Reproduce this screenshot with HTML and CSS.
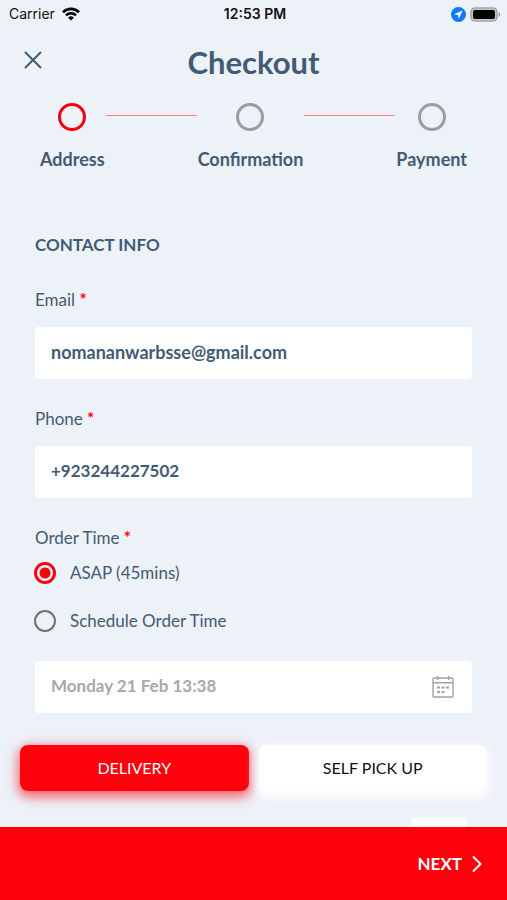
FILE: index.html
```
<!DOCTYPE html>
<html lang="en">
<head>
    <meta charset="UTF-8">
    <meta name="viewport" content="width=device-width, initial-scale=1.0">
    <title>Checkout</title>
    <link rel="stylesheet" href="styles.css">
</head>
<body>
    <div class="status-bar">
        <div class="status-left">
            <span>Carrier</span>
            <svg width="18" height="14" viewBox="0 0 18 14" fill="none" stroke="#000" stroke-width="2.6">
                <path d="M1 5.2a11.4 11.4 0 0 1 16 0"/>
                <path d="M4 8.3a7 7 0 0 1 10 0"/>
                <path d="M9 13.6 6.1 10.7a4.2 4.2 0 0 1 5.8 0z" fill="#000" stroke="none"/>
            </svg>
        </div>
        <div class="status-time">12:53 PM</div>
        <div class="status-right">
            <svg width="15" height="15" viewBox="0 0 15 15">
                <circle cx="7.5" cy="7.5" r="7.5" fill="#0a7aff"/>
                <path d="M11.6 3.4 3 7.3l4.1.6.6 4.1z" fill="#fff"/>
            </svg>
            <svg width="31" height="15" viewBox="0 0 31 15">
                <rect x="1" y="1" width="26" height="13" rx="4" fill="#c4c7cc" stroke="#a5a7ab" stroke-width="1.6"/>
                <rect x="3" y="3" width="22" height="9" rx="2" fill="#000"/>
                <path d="M28.6 5c2.4 1 2.4 4 0 5z" fill="#a5a7ab"/>
            </svg>
        </div>
    </div>

    <header class="header">
        <button type="button" class="close-btn" aria-label="Close">
            <svg width="18" height="18" viewBox="0 0 18 18" fill="none" stroke="#435b74" stroke-width="2" stroke-linecap="round">
                <path d="M1.5 1.5l15 15M16.5 1.5l-15 15"/>
            </svg>
        </button>
        <h1>Checkout</h1>
    </header>

    <div class="steps">
        <div class="step active">
            <span class="circle"></span>
            <span>Address</span>
        </div>
        <div class="line"></div>
        <div class="step">
            <span class="circle"></span>
            <span>Confirmation</span>
        </div>
        <div class="line"></div>
        <div class="step">
            <span class="circle"></span>
            <span>Payment</span>
        </div>
    </div>

    <main class="content">
        <form id="checkoutForm" class="checkout-form">
            <h2>CONTACT INFO</h2>

            <div class="form-group">
                <label for="email">Email <span class="required">*</span></label>
                <input type="email" id="email" class="field" value="nomananwarbsse@gmail.com" required>
            </div>

            <div class="form-group">
                <label for="phone">Phone <span class="required">*</span></label>
                <input type="tel" id="phone" class="field" value="+923244227502" required>
            </div>

            <fieldset class="order-time">
                <legend>Order Time <span class="required">*</span></legend>
                <label class="radio-row" for="asap">
                    <input type="radio" id="asap" name="orderTime" checked>
                    ASAP (45mins)
                </label>
                <label class="radio-row" for="schedule">
                    <input type="radio" id="schedule" name="orderTime">
                    Schedule Order Time
                </label>
            </fieldset>

            <div class="field date-field">
                <input type="text" id="orderDate" aria-label="Order date" value="Monday 21 Feb 13:38" disabled>
                <svg width="22" height="22" viewBox="0 0 22 22" fill="none" stroke="#a3a3a3" stroke-width="1.4">
                    <rect x="1" y="2" width="20" height="19" rx="1"/>
                    <path d="M1 6.8h20M5.5 0v4M16.5 0v4"/>
                    <path d="M5 11.5h3M9.5 11.5h3M14 11.5h3M5 16h3M9.5 16h3" stroke-width="2"/>
                </svg>
            </div>
        </form>

        <div class="delivery-options">
            <button type="button" class="option selected">DELIVERY</button>
            <button type="button" class="option">SELF PICK UP</button>
        </div>

        <div class="address-card"></div>
    </main>

    <footer class="footer">
        <button type="submit" form="checkoutForm" class="next-btn">
            NEXT
            <svg width="10" height="18" viewBox="0 0 10 18" fill="none" stroke="#fff" stroke-width="2">
                <path d="M1 1.5 8.5 9 1 16.5"/>
            </svg>
        </button>
    </footer>
</body>
</html>
```

FILE: styles.css
```
* {
    box-sizing: border-box;
}
body {
    font-family: Lato, 'Open Sans', sans-serif;
    font-size: 17px;
    line-height: 20px;
    background-color: #edf1f8;
    color: #435b74;
    margin: 0;
    height: 100vh;
    display: flex;
    flex-direction: column;
}
svg {
    display: block;
    flex-shrink: 0;
}
input, button {
    font-family: inherit;
    font-size: inherit;
    line-height: inherit;
    color: inherit;
}
button {
    border: none;
    cursor: pointer;
}
.status-bar {
    display: grid;
    grid-template-columns: 1fr auto 1fr;
    align-items: center;
    height: 28px;
    padding: 0 6px 0 9px;
    font-family: Inter, sans-serif;
    font-size: 14px;
    color: #111;
}
.status-left, .status-right {
    display: flex;
    align-items: center;
    gap: 7px;
}
.status-right {
    justify-content: flex-end;
    gap: 4px;
}
.status-time {
    font-weight: 600;
}
.header {
    display: grid;
    grid-template-columns: 24px 1fr 24px;
    align-items: center;
    padding: 14px 20px 21px;
}
.close-btn {
    background: none;
    padding: 0 4px 4px;
}
h1 {
    margin: 0;
    font-size: 31px;
    line-height: 40px;
    text-align: center;
}
.steps {
    display: flex;
    padding: 0 40px;
}
.step {
    display: flex;
    flex-direction: column;
    align-items: center;
    gap: 18px;
    font-size: 18px;
    font-weight: bold;
}
.circle {
    width: 28px;
    height: 28px;
    border: 3px solid #9b9ea1;
    border-radius: 50%;
}
.active .circle {
    border-color: #f6000e;
}
.line {
    flex: 1;
    height: 1px;
    margin: 12px 1px 0;
    background: #ff8089;
}
.content {
    flex: 1;
    min-height: 0;
    overflow: hidden;
    padding-top: 66px;
}
.checkout-form {
    padding: 0 35px;
}
h2 {
    margin: 0 0 35px;
    font-size: 17px;
    line-height: 20px;
}
.form-group {
    margin-bottom: 30px;
}
.form-group label {
    display: block;
    margin-bottom: 17px;
}
.required {
    color: #ff000d;
    font-weight: bold;
}
.field {
    display: block;
    width: 100%;
    height: 52px;
    padding: 0 16px 3px;
    background: white;
    border: none;
    border-radius: 4px;
    font-weight: bold;
}
.field[type="email"] {
    font-size: 18px;
}
.order-time {
    margin: 0 0 28px;
    padding: 0;
    border: none;
}
.order-time legend {
    padding: 0;
    margin-bottom: 13px;
}
.radio-row {
    display: flex;
    align-items: center;
    gap: 14px;
    height: 24px;
}
.radio-row + .radio-row {
    margin-top: 24px;
}
.radio-row input {
    appearance: none;
    width: 22px;
    height: 22px;
    margin: 0 0 0 -1px;
    border: 2px solid #707173;
    border-radius: 50%;
}
.radio-row input:checked {
    border: 3px solid #ff000d;
    background: radial-gradient(circle, #ff000d 5px, transparent 6px);
}
.date-field {
    display: flex;
    align-items: center;
    padding: 0 18px 0 16px;
}
.date-field input {
    flex: 1;
    min-width: 0;
    padding: 0 0 3px;
    border: none;
    background: none;
    font-weight: bold;
    color: #a9a9a9;
}
.delivery-options {
    display: flex;
    gap: 10px;
    padding: 32px 20px 0;
}
.option {
    flex: 1;
    height: 46px;
    padding: 0;
    border-radius: 8px;
    background: white;
    color: #111;
    font-size: 16px;
    box-shadow: 0 4px 12px 2px white;
}
.option.selected {
    background: #ff000d;
    color: white;
    box-shadow: 0 4px 12px 2px rgba(255, 0, 13, 0.6);
}
.address-card {
    width: 55px;
    height: 40px;
    margin: 27px 40px 0 auto;
    background: white;
    border-radius: 4px;
}
.footer {
    display: flex;
    justify-content: flex-end;
    align-items: center;
    height: 73px;
    padding: 0 25px;
    background: #ff000d;
}
.next-btn {
    display: flex;
    align-items: center;
    gap: 10px;
    padding: 0;
    background: none;
    color: white;
    font-weight: bold;
}
```
